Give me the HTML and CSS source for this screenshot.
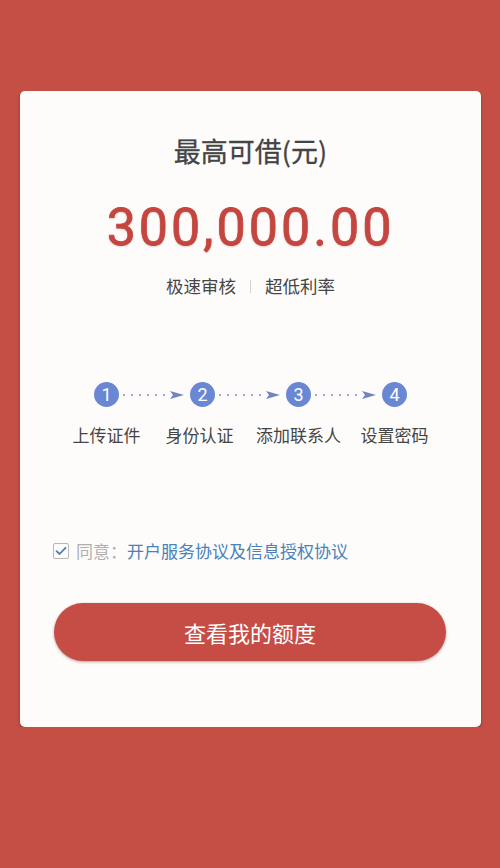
FILE: index.html
```html
<!DOCTYPE html>
<html lang="zh-CN">
<head>
	<meta charset="UTF-8">
	<title>最高可借</title>
	<link rel="stylesheet" href="styles.css">
</head>
<body>
	<div id="card">
		<h2 class="title">最高可借(元)</h2>
		<div class="amount">300,000.00</div>
		<div class="tags">
			<span>极速审核</span>
			<i class="sep"></i>
			<span>超低利率</span>
		</div>

		<div class="steps">
			<span class="num">1</span>
			<svg class="link" width="71" height="10" viewBox="0 0 71 10">
				<g fill="#8797c9">
					<circle cx="5" cy="5" r="1.1"/><circle cx="13" cy="5" r="1.1"/><circle cx="21" cy="5" r="1.1"/>
					<circle cx="29" cy="5" r="1.1"/><circle cx="37" cy="5" r="1.1"/><circle cx="45" cy="5" r="1.1"/>
				</g>
				<polygon points="51,1 65,5 51,9 54,5" fill="#7183c6"/>
			</svg>
			<span class="num">2</span>
			<svg class="link" width="71" height="10" viewBox="0 0 71 10">
				<g fill="#8797c9">
					<circle cx="5" cy="5" r="1.1"/><circle cx="13" cy="5" r="1.1"/><circle cx="21" cy="5" r="1.1"/>
					<circle cx="29" cy="5" r="1.1"/><circle cx="37" cy="5" r="1.1"/><circle cx="45" cy="5" r="1.1"/>
				</g>
				<polygon points="51,1 65,5 51,9 54,5" fill="#7183c6"/>
			</svg>
			<span class="num">3</span>
			<svg class="link" width="71" height="10" viewBox="0 0 71 10">
				<g fill="#8797c9">
					<circle cx="5" cy="5" r="1.1"/><circle cx="13" cy="5" r="1.1"/><circle cx="21" cy="5" r="1.1"/>
					<circle cx="29" cy="5" r="1.1"/><circle cx="37" cy="5" r="1.1"/><circle cx="45" cy="5" r="1.1"/>
				</g>
				<polygon points="51,1 65,5 51,9 54,5" fill="#7183c6"/>
			</svg>
			<span class="num">4</span>
		</div>
		<ul class="labels">
			<li>上传证件</li>
			<li>身份认证</li>
			<li>添加联系人</li>
			<li>设置密码</li>
		</ul>

		<label class="agree">
			<span class="box">
				<svg width="12" height="10" viewBox="0 0 12 10"><path d="M1.5 5.2 L4.6 8 L10.5 1.8" fill="none" stroke="#4a7db5" stroke-width="1.8" stroke-linecap="round" stroke-linejoin="round"/></svg>
			</span>
			<span class="gray">同意：</span><a href="#">开户服务协议及信息授权协议</a>
		</label>

		<button class="btn">查看我的额度</button>
	</div>
</body>
</html>
```

FILE: styles.css
```css
*{margin: 0;padding: 0;box-sizing: border-box;}
ul{list-style: none;}
body{
	background: #c64f45;
	padding-top: 91px;
	font-family: "Noto Sans CJK SC", "Noto Sans", sans-serif;
	color: #454545;
}
#card{
	width: 461px;
	height: 636px;
	margin-left: 20px;
	background: #fdfcfb;
	border-radius: 5px;
	box-shadow: 0 2px 3px rgba(60, 30, 30, .45);
	padding-top: 42px;
}
.title{
	font-size: 27px;
	font-weight: 400;
	line-height: 36px;
	text-align: center;
	color: #444;
	-webkit-text-stroke: .3px #444;
}
.amount{
	margin-top: 29px;
	font: 52px/60px Roboto, "Liberation Sans", sans-serif;
	letter-spacing: 3px;
	text-align: center;
	color: #c4463f;
	-webkit-text-stroke: .8px #c4463f;
	text-shadow: 0 1px 2px rgba(120, 40, 40, .3);
}
.tags{
	margin-top: 16px;
	display: flex;
	justify-content: center;
	align-items: center;
	gap: 14px;
	font-size: 17.5px;
	line-height: 24px;
	color: #464646;
}
.sep{
	width: 1px;
	height: 13px;
	background: #d2d2d2;
}
.steps{
	margin-top: 84px;
	display: flex;
	justify-content: center;
	align-items: center;
	height: 25px;
}
.num{
	width: 25px;
	height: 25px;
	border-radius: 50%;
	background: #6a87d3;
	color: #fff;
	font: 18px/25px Roboto, "Liberation Sans", sans-serif;
	text-align: center;
}
.link{
	display: block;
}
.labels{
	margin-top: 16px;
	display: grid;
	grid-template-columns: repeat(4, 96px);
	justify-content: center;
	font-size: 17px;
	line-height: 24px;
	text-align: center;
	color: #454545;
}
.labels li:nth-child(2){
	margin-right: 6px;
}
.agree{
	margin: 92px 0 0 33px;
	display: flex;
	align-items: center;
	font-size: 17px;
	line-height: 24px;
}
.box{
	width: 16px;
	height: 16px;
	border: 1px solid #b8b8b8;
	border-radius: 2px;
	display: flex;
	align-items: center;
	justify-content: center;
	margin-right: 7px;
}
.gray{
	color: #b0b0b0;
}
.agree a{
	color: #4a82b8;
	text-decoration: none;
}
.btn{
	display: block;
	width: 392px;
	height: 58px;
	margin: 40px 0 0 34px;
	border: none;
	border-radius: 29px;
	background: #c64d45;
	color: #fff;
	font-family: "Noto Sans CJK SC", sans-serif;
	font-size: 22px;
	box-shadow: 0 1px 3px rgba(80, 20, 20, .4);
}
```
